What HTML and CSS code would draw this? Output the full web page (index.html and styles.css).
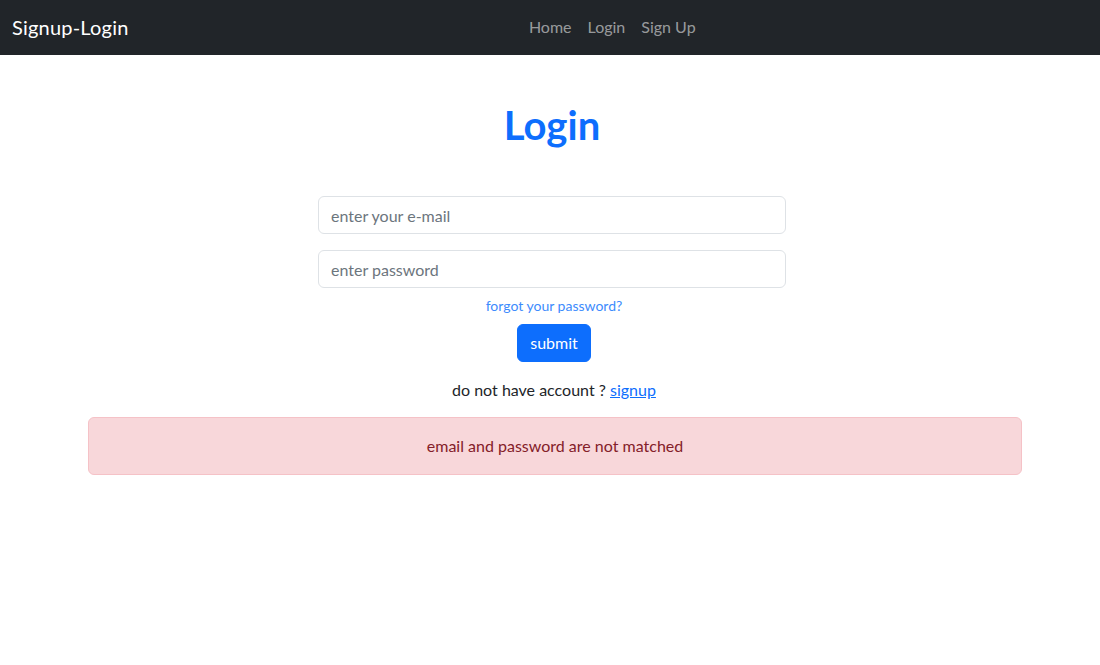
FILE: index.html
```html
<!DOCTYPE html>
<html lang="en">
<head>
<meta charset="utf-8">
<title>Signup-Login</title>
<link rel="stylesheet" href="styles.css">
</head>
<body>
<nav class="navbar">
  <a class="brand" href="#">Signup-Login</a>
  <ul class="nav">
    <li><a class="nav-link" href="#">Home</a></li>
    <li><a class="nav-link" href="#">Login</a></li>
    <li><a class="nav-link" href="#">Sign Up</a></li>
  </ul>
</nav>
<main class="page">
  <h1 class="title">Login</h1>
  <form class="form">
    <input class="field" type="email" placeholder="enter your e-mail">
    <input class="field" type="password" placeholder="enter password">
    <a class="forgot" href="#">forgot your password?</a>
    <button class="btn" type="button">submit</button>
    <p class="switch">do not have account ? <a href="#">signup</a></p>
  </form>
  <div class="alert">email and password are not matched</div>
</main>
</body>
</html>
```

FILE: styles.css
```css
* { box-sizing: border-box; }
html, body { margin: 0; padding: 0; }
body {
  font-family: Lato, "Noto Sans", sans-serif;
  font-size: 16px;
  line-height: 1.5;
  color: #212529;
  background: #fff;
}
.navbar {
  height: 55px;
  background: #212529;
  display: flex;
  align-items: center;
  padding: 0 12px 2px;
}
.brand {
  color: #fff;
  font-size: 20px;
  line-height: 30px;
  letter-spacing: 0.2px;
  text-decoration: none;
  margin-right: 16px;
}
.nav {
  list-style: none;
  margin: 0 auto;
  padding: 0;
  display: flex;
  transform: translateX(-4px);
}
.nav-link {
  display: block;
  padding: 8px;
  color: rgba(255,255,255,0.55);
  text-decoration: none;
}
.page {
  margin: 0 78px 0 88px;
  display: flex;
  flex-direction: column;
}
.title {
  margin: 46px 0 0;
  padding-right: 6px;
  text-align: center;
  color: #0d6efd;
  font-size: 40px;
  line-height: 1.2;
  font-weight: 700;
}
.form {
  width: 468px;
  margin: 47px 0 0 230px;
  padding-left: 4px;
  display: flex;
  flex-direction: column;
  align-items: center;
}
.field {
  width: calc(100% + 4px);
  margin-left: -4px;
  height: 38px;
  padding: 6px 12px;
  font: inherit;
  color: #212529;
  border: 1px solid #dee2e6;
  border-radius: 6px;
  margin-bottom: 16px;
}
.field::placeholder { color: #6c757d; }
.forgot {
  margin-top: -9px;
  font-size: 14px;
  line-height: 21px;
  color: #3d8bfd;
  text-decoration: none;
}
.btn {
  margin-top: 8px;
  height: 38px;
  padding: 6px 12.5px;
  font: inherit;
  color: #fff;
  background: #0d6efd;
  border: 1px solid #0d6efd;
  border-radius: 6px;
}
.switch {
  margin: 16px 0 0;
}
.switch a { color: #0d6efd; }
.alert {
  margin-top: 15px;
  padding: 16px;
  text-align: center;
  color: #842029;
  background: #f8d7da;
  border: 1px solid #f5c2c7;
  border-radius: 6px;
}
```
